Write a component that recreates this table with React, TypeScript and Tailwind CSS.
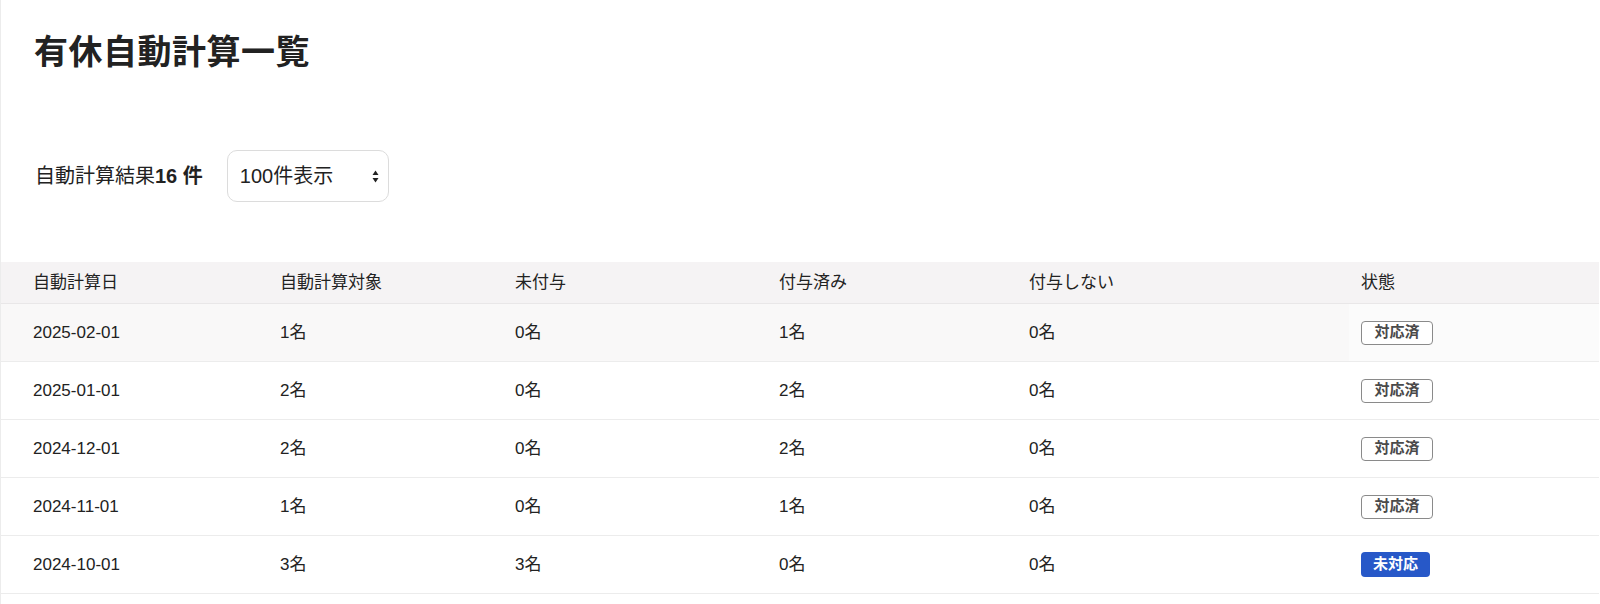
import { useState } from 'react';

type Row = {
  date: string;
  target: number;
  ungranted: number;
  granted: number;
  skipped: number;
  done: boolean;
};

const rows: Row[] = [
  { date: '2025-02-01', target: 1, ungranted: 0, granted: 1, skipped: 0, done: true },
  { date: '2025-01-01', target: 2, ungranted: 0, granted: 2, skipped: 0, done: true },
  { date: '2024-12-01', target: 2, ungranted: 0, granted: 2, skipped: 0, done: true },
  { date: '2024-11-01', target: 1, ungranted: 0, granted: 1, skipped: 0, done: true },
  { date: '2024-10-01', target: 3, ungranted: 3, granted: 0, skipped: 0, done: false },
];

const gridCols = 'grid grid-cols-[267px_235px_264px_250px_332px_1fr]';

function StatusBadge({ done }: { done: boolean }) {
  if (done) {
    return (
      <span className="inline-flex items-center justify-center h-[24px] w-[72px] rounded-[4px] border border-[#8a8a8a] bg-white text-[15px] font-bold text-[#4a4a4a]">
        対応済
      </span>
    );
  }
  return (
    <span className="inline-flex items-center justify-center h-[25px] w-[69px] rounded-[4px] bg-[#2758c8] text-[15px] font-bold text-white">
      未対応
    </span>
  );
}

export default function App() {
  const [perPage, setPerPage] = useState('100');

  return (
    <div
      className="min-h-[604px] w-full bg-white border-l border-[#ececec] text-[#222]"
      style={{ fontFamily: '"Liberation Sans", "Noto Sans CJK JP", sans-serif' }}
    >
      {/* Title */}
      <h1 className="pl-[33px] pt-[29px] h-[120px] text-[34px] font-bold leading-[46px] tracking-[0.5px] text-[#222]">
        有休自動計算一覧
      </h1>

      {/* Count + page size */}
      <div className="flex items-start pl-[34px] pt-[30px] h-[142px]">
        <div className="flex items-center h-[52px] text-[20px] text-[#222]">
          <span>自動計算結果</span>
          <span className="font-bold">16 件</span>
        </div>
        <div className="relative ml-[24px] text-[20px]">
          <select
            value={perPage}
            onChange={(e) => setPerPage(e.target.value)}
            className="appearance-none h-[52px] w-[162px] rounded-[10px] border border-[#dcdcdc] bg-white pl-[12px] font-[inherit] text-[20px] text-[#222] outline-none"
          >
            <option value="20">20件表示</option>
            <option value="50">50件表示</option>
            <option value="100">100件表示</option>
          </select>
          <svg
            className="pointer-events-none absolute right-[10px] top-[20px]"
            width="7"
            height="13"
            viewBox="0 0 7 13"
          >
            <path d="M3.5 0.5 L6.5 5 L0.5 5 Z" fill="#222" />
            <path d="M3.5 12.5 L6.5 8 L0.5 8 Z" fill="#222" />
          </svg>
        </div>
      </div>

      {/* Table */}
      <div className="mr-px">
        <div className={`${gridCols} h-[42px] items-center bg-[#f5f3f4] border-b border-[#e9e7e8] text-[17px] text-[#222]`}>
          <div className="pl-[32px]">自動計算日</div>
          <div className="pl-[12px]">自動計算対象</div>
          <div className="pl-[12px]">未付与</div>
          <div className="pl-[12px]">付与済み</div>
          <div className="pl-[12px]">付与しない</div>
          <div className="pl-[12px]">状態</div>
        </div>
        {rows.map((r, i) => (
          <div
            key={r.date}
            className={`${gridCols} h-[58px] items-stretch border-b border-[#ececec] text-[17px] ${
              i === 0 ? 'bg-[#f9f8f8]' : 'bg-white'
            }`}
          >
            <div className="flex items-center pl-[32px]">{r.date}</div>
            <div className="flex items-center pl-[12px]">{r.target}名</div>
            <div className="flex items-center pl-[12px]">{r.ungranted}名</div>
            <div className="flex items-center pl-[12px]">{r.granted}名</div>
            <div className="flex items-center pl-[12px]">{r.skipped}名</div>
            <div className={`flex items-center pl-[12px] ${i === 0 ? 'bg-[#fbfbfb]' : ''}`}>
              <StatusBadge done={r.done} />
            </div>
          </div>
        ))}
      </div>
    </div>
  );
}
